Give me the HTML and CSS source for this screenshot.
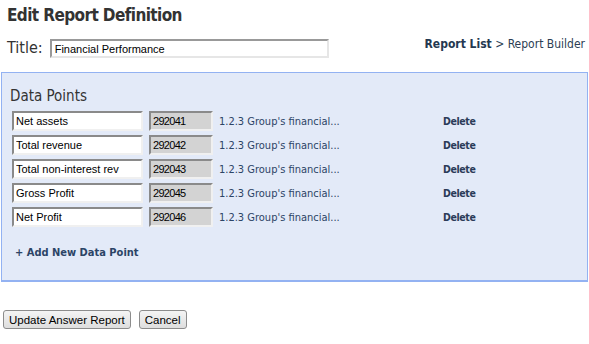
FILE: index.html
```html
<!DOCTYPE html>
<html lang="en">
<head>
    <meta charset="UTF-8">
    <title>Edit Report Definition</title>
    <link rel="stylesheet" href="styles.css">
</head>
<body>
    <h1 class="page-title">Edit Report Definition</h1>

    <div class="title-row">
        <label class="title-label" for="reportTitle">Title:</label>
        <input id="reportTitle" class="title-input" type="text" value="Financial Performance">
        <div class="crumbs">
            <a href="#" class="crumb-link">Report List</a> &gt; Report Builder
        </div>
    </div>

    <div class="panel">
        <h2 class="panel-title">Data Points</h2>
        <div class="points">
            <div class="point-row">
                <input class="point-name" type="text" value="Net assets">
                <input class="point-id" type="text" value="292041" readonly>
                <span class="point-desc">1.2.3 Group's financial...</span>
                <a href="#" class="point-delete">Delete</a>
            </div>
            <div class="point-row">
                <input class="point-name" type="text" value="Total revenue">
                <input class="point-id" type="text" value="292042" readonly>
                <span class="point-desc">1.2.3 Group's financial...</span>
                <a href="#" class="point-delete">Delete</a>
            </div>
            <div class="point-row">
                <input class="point-name" type="text" value="Total non-interest rev">
                <input class="point-id" type="text" value="292043" readonly>
                <span class="point-desc">1.2.3 Group's financial...</span>
                <a href="#" class="point-delete">Delete</a>
            </div>
            <div class="point-row">
                <input class="point-name" type="text" value="Gross Profit">
                <input class="point-id" type="text" value="292045" readonly>
                <span class="point-desc">1.2.3 Group's financial...</span>
                <a href="#" class="point-delete">Delete</a>
            </div>
            <div class="point-row">
                <input class="point-name" type="text" value="Net Profit">
                <input class="point-id" type="text" value="292046" readonly>
                <span class="point-desc">1.2.3 Group's financial...</span>
                <a href="#" class="point-delete">Delete</a>
            </div>
        </div>
        <a href="#" class="add-link">+ Add New Data Point</a>
    </div>

    <div class="actions">
        <button class="btn">Update Answer Report</button>
        <button class="btn">Cancel</button>
    </div>
</body>
</html>
```

FILE: styles.css
```css
body {
    margin: 0;
    font-family: "DejaVu Sans Condensed", "DejaVu Sans", sans-serif;
    color: #333;
    background: #fff;
}

a {
    text-decoration: none;
}

.page-title {
    margin: 0;
    padding: 3px 7px 0;
    font-size: 17px;
    line-height: 24px;
    letter-spacing: -0.6px;
    font-weight: bold;
    color: #333;
}

.title-row {
    display: flex;
    align-items: center;
    height: 24px;
    margin-top: 8px;
    padding: 0 4px 0 7px;
}

.title-label {
    font-size: 16px;
    color: #333;
    margin-right: 7px;
}

.title-input {
    width: 279px;
    height: 19px;
    box-sizing: border-box;
    padding: 0 3px;
    font-family: "Liberation Sans", Arial, sans-serif;
    font-size: 11px;
    color: #000;
    border: 2px solid #e6e6e6;
    border-top-color: #999;
    border-left-color: #999;
    margin-top: 3px;
}

.crumbs {
    margin-left: auto;
    margin-top: -6px;
    font-size: 12px;
    color: #2c3e54;
}

.crumb-link {
    font-weight: bold;
    color: #243850;
}

.panel {
    margin: 13px 1px 0;
    padding: 12px 10px 20px;
    background: #e3eaf8;
    border: 1px solid #93b2f2;
    border-bottom-width: 2px;
}

.panel-title {
    margin: 0 0 4px -2px;
    font-size: 15px;
    line-height: 22px;
    font-weight: normal;
    color: #333;
}

.points {
    display: flex;
    flex-direction: column;
    gap: 4px;
}

.point-row {
    display: flex;
    align-items: center;
    height: 20px;
}

.point-name,
.point-id {
    height: 20px;
    box-sizing: border-box;
    padding: 0 2px;
    font-family: "Liberation Sans", Arial, sans-serif;
    font-size: 11px;
    color: #000;
    border: 2px solid #f0f0f0;
    border-top-color: #8a8a8a;
    border-left-color: #8a8a8a;
}

.point-name {
    width: 131px;
    background: #fff;
}

.point-id {
    width: 64px;
    margin-left: 6px;
    letter-spacing: -0.7px;
    background: #d3d3d3;
}

.point-desc {
    width: 224px;
    margin-left: 6px;
    font-size: 11px;
    color: #2c4466;
}

.point-delete {
    font-size: 10.5px;
    letter-spacing: -0.4px;
    font-weight: bold;
    color: #2b3b58;
}

.add-link {
    display: inline-block;
    margin: 19px 0 0 3px;
    font-size: 11px;
    font-weight: bold;
    color: #2c4466;
}

.actions {
    display: flex;
    gap: 8px;
    margin-top: 28px;
    padding-left: 3px;
}

.btn {
    height: 19px;
    padding: 0 5px;
    font-family: "Liberation Sans", Arial, sans-serif;
    font-size: 11.5px;
    color: #000;
    background: linear-gradient(#f4f4f4, #dedede);
    border: 1px solid #8c8c8c;
    border-radius: 3px;
}
```
